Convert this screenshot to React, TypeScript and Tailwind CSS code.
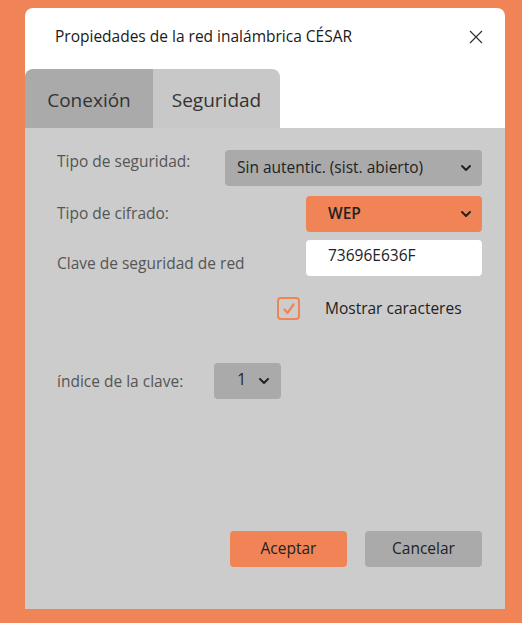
import { ChevronDown } from "lucide-react";

const font = { fontFamily: '"Open Sans", "Noto Sans", sans-serif' };

function Select({ value, className }: { value: string; className: string }) {
  return (
    <div className={`flex h-9 items-center justify-between rounded-[4px] ${className}`}>
      <span className="text-[15.5px] text-[#222]">{value}</span>
      <ChevronDown size={16} strokeWidth={3} className="text-[#222]" />
    </div>
  );
}

export default function App() {
  return (
    <div className="min-h-[623px] w-[522px] bg-[#f08456] pt-2 pl-[25px]" style={font}>
      <div className="flex h-[601px] w-[480px] flex-col">
        <div className="rounded-t-[8px] bg-white">
          <div className="flex h-[61px] items-center justify-between pl-[30px] pr-[22px] pb-1">
            <span className="text-[15.5px] text-[#1a1a1a]">Propiedades de la red inalámbrica CÉSAR</span>
            <svg width="14" height="14" viewBox="0 0 14 14" className="text-[#333]">
              <path d="M1 1L13 13M13 1L1 13" stroke="currentColor" strokeWidth="1.2" />
            </svg>
          </div>
          <div className="flex h-[59px]">
            <div className="flex w-[128px] items-center justify-center rounded-tl-[8px] bg-[#aaaaaa] pt-1 text-[19px] text-[#333]">
              Conexión
            </div>
            <div className="flex w-[127px] items-center justify-center rounded-tr-[8px] bg-[#c8c8c8] pt-1 text-[19px] text-[#333]">
              Seguridad
            </div>
          </div>
        </div>

        <div className="flex flex-1 flex-col bg-[#cccccc] pl-8 pr-[23px] pt-[22px] pb-[42px] text-[15.5px] text-[#555]">
          <div className="flex items-center justify-between">
            <span className="-mt-3">Tipo de seguridad:</span>
            <Select value="Sin autentic. (sist. abierto)" className="w-[257px] bg-[#aaaaaa] pl-3 pr-[8px]" />
          </div>
          <div className="mt-[10px] flex items-center justify-between">
            <span>Tipo de cifrado:</span>
            <Select value="WEP" className="w-[176px] bg-[#f08456] pl-[22px] pr-[8px] font-semibold" />
          </div>
          <div className="mt-[8px] flex items-center justify-between">
            <span className="mt-3">Clave de seguridad de red</span>
            <div className="flex h-9 w-[176px] items-center rounded-[4px] bg-white pb-1 pl-[22px] text-[#222]">73696E636F</div>
          </div>
          <div className="mt-[21px] flex items-center pl-[220px]">
            <div className="flex h-[23px] w-[23px] items-center justify-center rounded-[4px] border-[2.5px] border-[#f08456]">
              <svg width="14" height="14" viewBox="0 0 14 14">
                <path d="M2.5 7.5L5.5 11L11.5 2.5" stroke="#f08456" strokeWidth="2.2" fill="none" strokeLinecap="round" strokeLinejoin="round" />
              </svg>
            </div>
            <span className="ml-[25px] text-[#222]">Mostrar caracteres</span>
          </div>
          <div className="mt-[43px] flex items-center">
            <span>índice de la clave:</span>
            <div className="ml-[31px] flex h-9 w-[67px] items-center justify-end gap-[10px] rounded-[4px] bg-[#aaaaaa] pr-[9px]">
              <span className="pb-1 text-[#222]">1</span>
              <ChevronDown size={16} strokeWidth={3} className="text-[#222]" />
            </div>
          </div>
          <div className="mt-auto flex justify-end gap-[18px]">
            <button className="h-9 w-[117px] rounded-[4px] bg-[#f08456] text-[15.5px] text-[#222]">Aceptar</button>
            <button className="h-9 w-[117px] rounded-[4px] bg-[#aaaaaa] text-[15.5px] text-[#222]">Cancelar</button>
          </div>
        </div>
      </div>
    </div>
  );
}
